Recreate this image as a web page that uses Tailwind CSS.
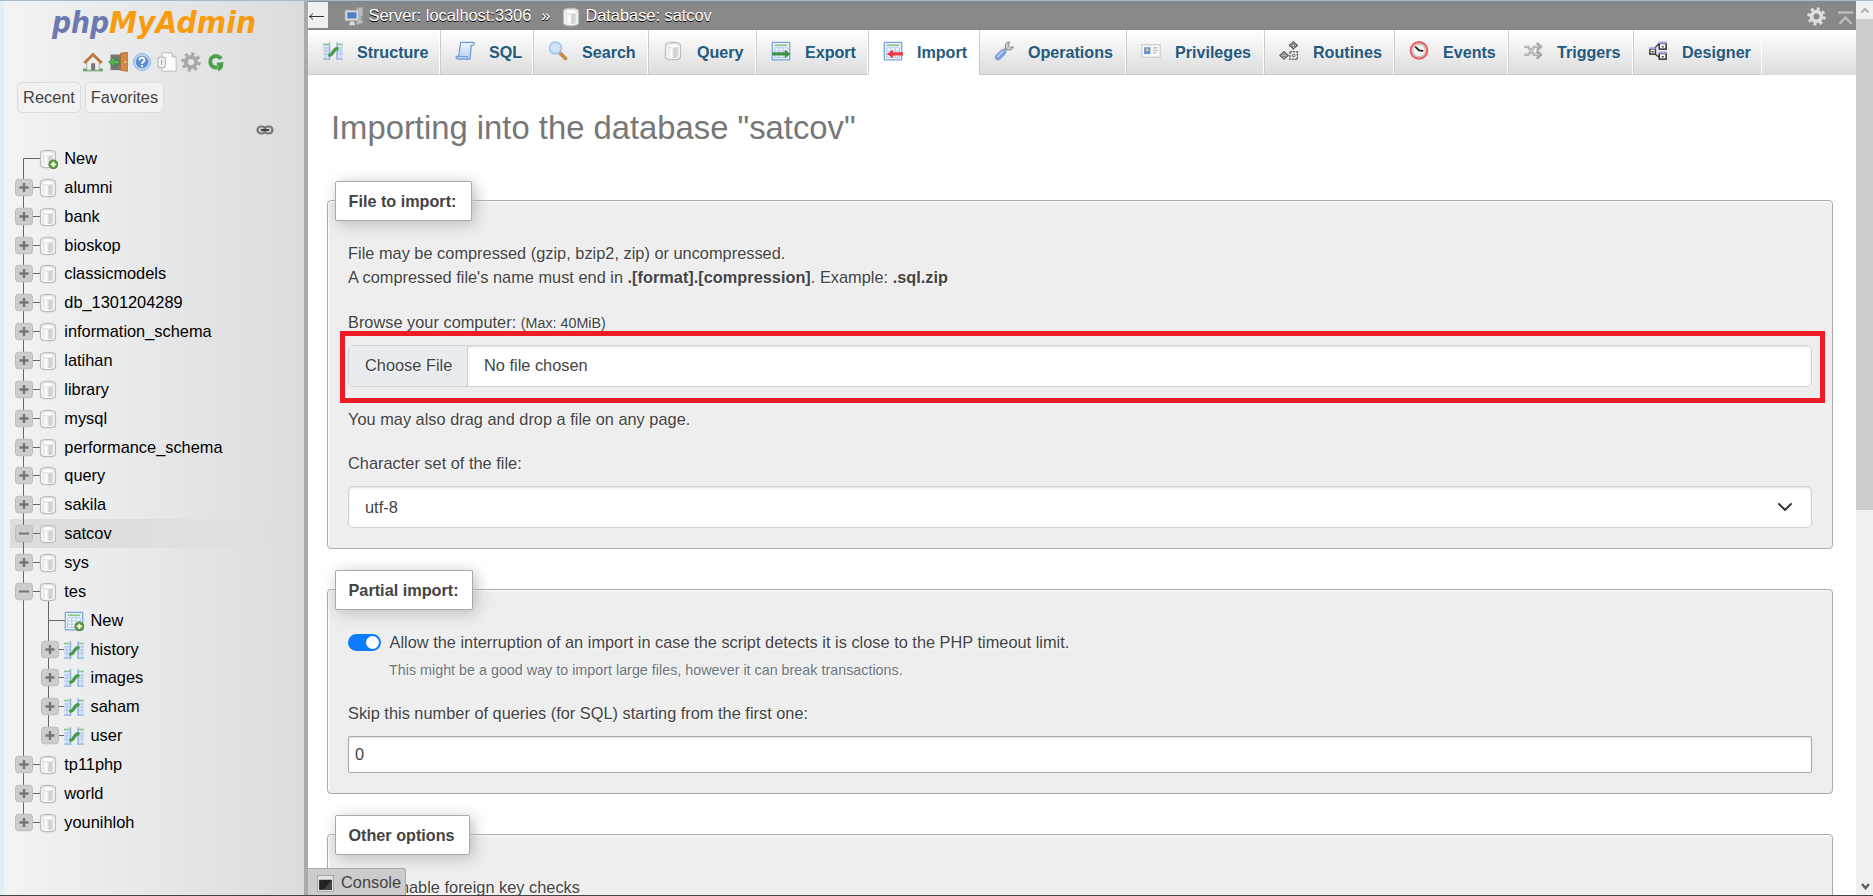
<!DOCTYPE html>
<html lang="en">
<head>
<meta charset="utf-8">
<title>Import - satcov - phpMyAdmin</title>
<script src="https://cdn.jsdelivr.net/npm/@tailwindcss/browser@4"></script>
</head>
<body class="h-[896px] w-[1873px] overflow-hidden bg-white text-[16.380px] text-[#444] [font-family:'Liberation_Sans',Arial,sans-serif]">
<svg class="absolute size-0">
  <defs>
    <linearGradient id="cyl"><stop offset="0" stop-color="#e2e2e2"/><stop offset=".35" stop-color="#fff"/><stop offset=".65" stop-color="#cdcdcd"/><stop offset="1" stop-color="#e0e0e0"/></linearGradient>
    <linearGradient id="blu" x1="0" y1="0" x2="0" y2="1"><stop offset="0" stop-color="#eef5fd"/><stop offset="1" stop-color="#b3d0f3"/></linearGradient>
  </defs>
  <symbol id="db" viewBox="0 0 16 16"><path d="M2 3.500C2 .2 14 .2 14 3.500v9c0 3.300-12 3.300-12 0z" fill="#f8f8f8" stroke="#bcbcbc"/><path d="M3.700 4.500h8.600v8c-1 1.500-7.600 1.500-8.600 0z" fill="url(#cyl)"/><ellipse cx="8" cy="3.900" rx="4.500" ry="1.700" fill="#fff" stroke="#d0d0d0" stroke-width=".6"/></symbol>
  <symbol id="add" viewBox="0 0 16 16"><circle cx="12.300" cy="12.300" r="3.600" fill="#5d9d3a" stroke="#3f7a26" stroke-width=".6"/><path d="M12.300 10.200v4.200M10.200 12.300h4.200" stroke="#fff" stroke-width="1.400"/></symbol>
  <symbol id="tbl" viewBox="0 0 16 16"><rect x="1" y="1" width="14" height="14" rx=".5" fill="#e6f0fb" stroke="#7ea3d8"/><path d="M3 3.400h10" stroke="#8cc97a" stroke-width="1.300"/><path d="M3 5.500h10v7.500H3z" fill="#fff" stroke="#a9c4e8" stroke-width=".8"/><path d="M3 8h10M3 10.500h10M6.300 5.500V13M9.700 5.500V13" stroke="#a9c4e8" stroke-width=".8"/></symbol>
  <symbol id="struct" viewBox="0 0 16 16"><path d="M0 1.500h5.200v13H0zM16 1.500h-4.700v13H16z" fill="#dce9f9"/><path d="M5.200 1v14M11.300 1v14" stroke="#8db2e3" stroke-width="1.200"/><path d="M0 14.500h5.500M11 14.500h5" stroke="#8db2e3"/><path d="M0 2.700h4.500M12 2.700H16" stroke="#8cc97a" stroke-width="1.200"/><path d="M0 5.500h4.500M0 8h4.500M0 10.500h4.500M12 5.500H16M12 8H16M12 10.500H16M2.300 5v9M14.300 5v9" stroke="#a9c4e8" stroke-width=".7"/><path d="M5.300 11.300c1.500 0 1.700-.8 2.700-2.300s1.600-2.800 3.300-2.800" fill="none" stroke="#4b9a49" stroke-width="2.700" stroke-linecap="round"/></symbol>
  <symbol id="gear" viewBox="0 0 16 16"><circle cx="8" cy="8" r="6.500" fill="none" stroke="currentColor" stroke-width="2.600" stroke-dasharray="2.500 2.605"/><circle cx="8" cy="8" r="4.100" fill="none" stroke="currentColor" stroke-width="3.200"/></symbol>
  <symbol id="plus" viewBox="0 0 18 18"><rect x=".5" y=".5" width="17" height="17" rx="3.500" fill="#cdcdcd" stroke="#bbb"/><path d="M9 4.500v9M4.500 9h9" stroke="#757575" stroke-width="2.400"/></symbol>
  <symbol id="minus" viewBox="0 0 18 18"><rect x=".5" y=".5" width="17" height="17" rx="3.500" fill="#cdcdcd" stroke="#bbb"/><path d="M4 9h10" stroke="#757575" stroke-width="2"/></symbol>
</svg>
<div class="flex h-[896px] flex-col border-t border-b border-t-[#a9bac6] border-b-[#444]">
<div class="flex min-h-0 flex-1">
  <div class="w-1 shrink-0 bg-[#e5eef5]"></div>
  <aside class="flex w-[300px] shrink-0 flex-col bg-linear-to-r from-[#f3f3f3] to-[#dadcde]">
    <svg class="mt-[5px] ml-[46px] h-[38px] w-[212px]" viewBox="0 0 212 38">
      <text x="2" y="27" textLength="57" lengthAdjust="spacingAndGlyphs" font-family="'DejaVu Sans'" font-size="29.500" font-style="oblique" font-weight="bold" fill="#6c78af">php</text>
      <text x="59" y="27" textLength="147" lengthAdjust="spacingAndGlyphs" font-family="'DejaVu Sans'" font-size="29.500" font-style="oblique" font-weight="bold" fill="#f89c0e">MyAdmin</text>
    </svg>
    <div class="mt-[8px] ml-[79px] flex h-5 gap-[4.500px]">
      <svg class="size-5" viewBox="0 0 16 16"><path d="M0 13.200h16v2.300H0z" fill="#63a85c"/><path d="M3 8l5-5 5 5v6.500H3z" fill="#eee" stroke="#999" stroke-width=".6"/><path d="M6.500 9h3.200v5.500H6.500z" fill="#777"/><path d="M1 8.800L8 2l7 6.800" fill="none" stroke="#b97a3c" stroke-width="2.200"/></svg>
      <svg class="size-5" viewBox="0 0 16 16"><path d="M2 2h9v12.500H2z" fill="#777"/><path d="M10 1l5.500-.8v15.300L10 14.500z" fill="#d08a45" stroke="#a8672a" stroke-width=".6"/><circle cx="13.800" cy="8" r=".7" fill="#ffe08a"/><path d="M.5 8l4.500-4v2.500h4v3H5V12z" fill="#57b457" stroke="#2f8038" stroke-width=".5"/></svg>
      <svg class="size-5" viewBox="0 0 16 16"><circle cx="8" cy="8" r="6.800" fill="#bcd5f2" stroke="#8aaedc" stroke-width=".7"/><circle cx="8" cy="8" r="5" fill="#5b8fd0"/><path d="M6 6.500C6 4 10 4 10 6.400 10 8 8 7.900 8 9.400M8 10.600v1.400" stroke="#fff" stroke-width="1.500" fill="none"/></svg>
      <svg class="size-5" viewBox="0 0 16 16"><path d="M4 .7h8l3.300 3.300v11.300H4z" fill="#fcfcfc" stroke="#bcbcbc" stroke-width=".8"/><path d="M12 .7V4h3.300" fill="#e0e0e0" stroke="#bcbcbc" stroke-width=".8"/><rect x=".7" y="4" width="6" height="8.500" rx="2" fill="#f4f4f4" stroke="#bcbcbc"/><path d="M3.700 6v4.500" stroke="#b5b5b5" stroke-width="1.200"/></svg>
      <svg class="size-5 text-[#a9a9a9]"><use href="#gear"/></svg>
      <svg class="size-5" viewBox="0 0 16 16"><path d="M12 5.500A4.600 4.600 0 1 0 9 12.300" fill="none" stroke="#50a04b" stroke-width="3.200"/><path d="M6.500 8h6.500M8.500 8.500l5.500-.5-.5 4.500-3.500 3z" fill="#50a04b"/></svg>
    </div>
    <div class="mt-[10px] ml-[13px] flex gap-1">
      <div class="h-[31px] w-[64px] rounded-[5px] border border-[#ddd] bg-[#f2f2f2] pt-[3px] text-center leading-[23px]">Recent</div>
      <div class="h-[31px] w-[79px] rounded-[5px] border border-[#ddd] bg-[#f2f2f2] pt-[3px] text-center leading-[23px]">Favorites</div>
    </div>
    <svg class="mt-[11px] ml-[252px] h-[12px] w-[18px]" viewBox="0 0 18 12"><rect x="1.500" y="2.500" width="8" height="7" rx="3.500" fill="#ccc" stroke="#777" stroke-width="2.200"/><rect x="8.500" y="2.500" width="8" height="7" rx="3.500" fill="#ccc" stroke="#777" stroke-width="2.200"/><path d="M5 6h8" stroke="#444" stroke-width="2"/></svg>
    <ul id="tree" class="mt-[8px] ml-[6px] text-black"></ul>
  </aside>
  <div class="w-1 shrink-0 bg-[#aaa]"></div>
  <main class="relative flex min-w-0 flex-1 flex-col overflow-hidden">
    <div class="flex h-[29px] shrink-0 items-start bg-[#888] text-white [text-shadow:0_1px_0_#000]">
      <div class="mt-px h-[26px] w-5 bg-[#f0f0f0]"><svg class="size-full" viewBox="0 0 20 26"><path d="M1.500 14.500h14.500M5 11.500l-3.500 3 3.500 3" fill="none" stroke="#333" stroke-width="1"/></svg></div>
      <svg class="mt-[6px] ml-4 size-5" viewBox="0 0 16 16"><path d="M10 1l5-1v13l-5 1z" fill="#bdbdbd" stroke="#999" stroke-width=".6"/><path d="M14 7v4" stroke="#5cb85c"/><rect x=".8" y="2.500" width="11" height="8.500" rx="1" fill="#dcdcdc" stroke="#aaa" stroke-width=".8"/><rect x="2.600" y="4.200" width="7.400" height="5" fill="#4f7fc4"/><path d="M4 14.500h5l-1-3H5z" fill="#ddd"/></svg>
      <span class="ml-[4.500px] leading-[29px]">Server: localhost:3306</span>
      <span class="ml-[10px] leading-[29px]">»</span>
      <svg class="mt-[6px] ml-[11px] size-5"><use href="#db"/></svg>
      <span class="ml-[4px] leading-[29px]">Database: satcov</span>
      <svg class="mt-[6px] ml-auto size-[19px] text-[#dedede]"><use href="#gear"/></svg>
      <svg class="mt-[10px] mr-[3px] ml-[12px] h-[14px] w-[15px] shrink-0" viewBox="0 0 15 14"><path d="M0 1.500h15M1.500 13l6-6.500 6 6.500" fill="none" stroke="#bbb" stroke-width="2.500"/></svg>
    </div>
    <nav id="tabs" class="flex h-[45px] shrink-0 bg-linear-to-b from-white to-[#dcdcdc] text-[16.100px] font-bold text-[#235a81]">
    </nav>
    <h2 class="mt-[31px] ml-[23px] h-[44px] shrink-0 text-[32.800px] leading-[44px] text-[#777]">Importing into the database "satcov"</h2>

    <section class="relative mt-[50px] mr-[23px] ml-[19px] h-[349px] shrink-0 rounded-[4px] border border-[#aaa] bg-[#eee] px-5 [text-shadow:1px_1px_2px_#fff] shadow-[inset_1px_1px_2px_#fff]">
      <div class="absolute top-[-20px] left-[7px] h-[40px] w-[137px] rounded-[2px] border border-[#aaa] bg-white pl-[12.500px] text-[16.200px] leading-[39px] font-bold shadow-[3px_3px_15px_#bbb]">File to import:</div>
      <p class="mt-[40px] leading-6">File may be compressed (gzip, bzip2, zip) or uncompressed.<br>A compressed file's name must end in <b class="text-[16.330px]">.[format].[compression]</b>. Example: <b class="text-[16.330px]">.sql.zip</b></p>
      <div class="mt-[21px] leading-6">Browse your computer: <small class="text-[14.320px]">(Max: 40MiB)</small></div>
      <div class="mt-[10px] flex h-[42px] overflow-hidden rounded-[5px] border border-[#ced4da] bg-white leading-[39px]">
        <div class="w-[119px] border-r border-[#ced4da] bg-[#e9ecef] pl-4">Choose File</div>
        <div class="flex-1 pl-4 shadow-[inset_0_1px_2px_#ddd]">No file chosen</div>
      </div>
      <div class="absolute top-[130px] left-[12px] h-[72px] w-[1485px] border-[5px] border-[#ed1c24]"></div>
      <p class="mt-[20px] leading-6">You may also drag and drop a file on any page.</p>
      <p class="mt-5 leading-6">Character set of the file:</p>
      <div class="mt-[11px] flex h-[42px] items-center justify-between rounded-[5px] border border-[#ced4da] bg-white pr-[18px] pl-4 shadow-[inset_0_1px_2px_#ddd]">utf-8
        <svg class="h-[16px] w-[16px]" viewBox="0 0 16 16"><path d="M2 5l6 6 6-6" fill="none" stroke="#343a40" stroke-width="2" stroke-linecap="round" stroke-linejoin="round"/></svg>
      </div>
    </section>

    <section class="relative mt-[40px] mr-[23px] ml-[19px] h-[205px] shrink-0 rounded-[4px] border border-[#aaa] bg-[#eee] px-5 [text-shadow:1px_1px_2px_#fff] shadow-[inset_1px_1px_2px_#fff]">
      <div class="absolute top-[-20px] left-[7px] h-[40px] w-[138px] rounded-[2px] border border-[#aaa] bg-white pl-[12.500px] text-[16.250px] leading-[39px] font-bold shadow-[3px_3px_15px_#bbb]">Partial import:</div>
      <div class="mt-[40px] flex items-center leading-6">
        <div class="flex h-[17px] w-[33px] items-center justify-end rounded-full bg-[#0d7bff] pr-[2px]"><div class="size-[13px] rounded-full bg-white"></div></div>
        <span class="ml-[8.500px]">Allow the interruption of an import in case the script detects it is close to the PHP timeout limit.</span>
      </div>
      <div class="mt-[6px] ml-[41px] text-[14.340px] leading-[21px] text-[#6c757d]">This might be a good way to import large files, however it can break transactions.</div>
      <p class="mt-[20px] leading-6">Skip this number of queries (for SQL) starting from the first one:</p>
      <div class="mt-[11px] h-[37px] rounded-[2px] border border-[#aaa] bg-white pl-[6px] leading-[35px] shadow-[inset_0_1px_2px_#ddd]">0</div>
    </section>

    <section class="relative mt-[40px] mr-[23px] ml-[19px] h-[205px] shrink-0 rounded-[4px] border border-[#aaa] bg-[#eee] px-5 [text-shadow:1px_1px_2px_#fff] shadow-[inset_1px_1px_2px_#fff]">
      <div class="absolute top-[-20px] left-[7px] h-[40px] w-[135px] rounded-[2px] border border-[#aaa] bg-white pl-[12.500px] text-[16.200px] leading-[39px] font-bold shadow-[3px_3px_15px_#bbb]">Other options</div>
      <p class="mt-[40px] pl-[41px] leading-6">Enable foreign key checks</p>
    </section>
    <div class="absolute bottom-0 left-0 flex h-[27px] w-[98px] items-center rounded-tr-[3px] border-t border-r border-[#aaa] bg-[#ccc]">
      <svg class="mt-[2px] ml-[9px] size-[17px]" viewBox="0 0 16 16"><rect x=".5" y=".5" width="15" height="15" fill="#e5e5e5" stroke="#aaa"/><path d="M2 4.500h12v9.500H2z" fill="#222"/><path d="M14 4.500V14H6z" fill="#444"/></svg>
      <span class="ml-[7px] leading-6">Console</span>
    </div>
  </main>
  <div class="flex w-[17px] shrink-0 flex-col bg-[#f0f0f0]">
    <svg class="h-[18px] w-[17px]" viewBox="0 0 17 18"><path d="M5.500 11.500L9 8l3.500 3.500" fill="none" stroke="#b0b0b0" stroke-width="2"/></svg>
    <div class="h-[491px] bg-[#cdcdcd]"></div>
    <svg class="mt-auto h-[17px] w-[17px]" viewBox="0 0 17 17"><path d="M6 6l3.500 4L13 6" fill="none" stroke="#606060" stroke-width="2.500"/></svg>
  </div>
</div>
</div>
<script>
const tabs = [
 ['Structure',132,'<use href="#struct"/>'],
 ['SQL',93,'<path d="M4.500 1h10c1.500 0 1 2.500-.5 2.500H13L12 14.500H2.500C.5 14.500.5 12 2 12h1z" fill="url(#blu)" stroke="#6f9bd6"/><path d="M2.500 12.500H10v2" fill="none" stroke="#6f9bd6" stroke-width=".8"/>'],
 ['Search',115,'<path d="M9.500 9.500l4.500 4.500" stroke="#c98a50" stroke-width="3" stroke-linecap="round"/><circle cx="6" cy="5.500" r="4.700" fill="#cfe2fa" stroke="#aac4e8" stroke-width="1.400"/>'],
 ['Query',108,'<use href="#db"/>'],
 ['Export',112,'<use href="#tbl"/><path d="M1 9h10V7l4.700 3.300-4.700 3.200v-2H1z" fill="#3f9142"/>'],
 ['Import',111,'<use href="#tbl"/><path d="M16 9H8V7L3 10.300l5 3.200v-2h8z" fill="#ee3b43"/>'],
 ['Operations',147,'<path d="M3.200 13l4-4" stroke="#7c9fe0" stroke-width="5" stroke-linecap="round"/><path d="M3 12.500l4-4" stroke="#b9cdf3" stroke-width="1.500" stroke-linecap="round"/><path d="M8.500 7.500l3-3" stroke="#aaa" stroke-width="3"/><path d="M12.500.8a3.200 3.200 0 1 0 2.900 3.700l-2.400.7-1.600-1.600z" fill="#ccc" stroke="#888" stroke-width=".8"/>'],
 ['Privileges',138,'<rect x=".7" y="3" width="14.600" height="10" fill="#fafafa" stroke="#ccc"/><rect x="2.500" y="5" width="5" height="5.500" fill="#5a92d8"/><circle cx="5" cy="7" r="1.300" fill="#f0c080"/><path d="M9.500 5.500h4M9.500 7.500h4M9.500 9.500h3" stroke="#bbb"/>'],
 ['Routines',130,'<g fill="#e4e4e4" stroke="#666" stroke-width="1.100"><path d="M11.500.6l1.200 1.300 2 1.600-2 1.600-1.200 1.300-1.200-1.300-2-1.600 2-1.600zM4 8.500l1.300 1.300 2 1.700-2 1.700L4 14.500l-1.300-1.300-2-1.700 2-1.700z" stroke-linejoin="round"/><rect x="8.700" y="8.500" width="6" height="6.200" stroke-dasharray="1.800 .7"/></g><g fill="#fff" stroke="#777" stroke-width=".9"><circle cx="11.500" cy="3.500" r="1"/><circle cx="4" cy="11.500" r="1"/><circle cx="11.700" cy="11.600" r="1"/></g>'],
 ['Events',114,'<circle cx="8" cy="7.500" r="6.600" fill="#eee" stroke="#ee5e5e" stroke-width="1.700"/><circle cx="8" cy="7.500" r="5" fill="#f5f5f5" stroke="#aaa" stroke-width=".7"/><path d="M5 4.500l3 3 3.500.5" fill="none" stroke="#222" stroke-width="1.400"/>'],
 ['Triggers',125,'<path d="M1 4.500h3l5 6.500h4M1 11h3l5-6.500h4M11 1.500l3.300 3-3.300 3M11 8l3.300 3-3.300 3" fill="none" stroke="#a5a5a5" stroke-width="2"/><path d="M1 4.500h3l5 6.500h4M1 11h3l5-6.500h4" fill="none" stroke="#ddd" stroke-width=".7"/>'],
 ['Designer',129,'<path d="M5 6l4-4M5 10l4 3" stroke="#444" stroke-width="1.200"/><g fill="#fff" stroke="#333" stroke-width="1.200"><rect x="1.500" y="6.500" width="4.500" height="4"/><rect x="9" y="2" width="5.500" height="4.500"/><rect x="9" y="10" width="5.500" height="4.500"/></g><path d="M8.500 1.200h6.500M8.500 9.300h6.500M1 5.900h5" stroke="#a5a5e5" stroke-width="1.800"/><path d="M3 8.500h1.500M11 4.500h1.500M11 12.500h1.500" stroke="#333" stroke-width="1.200"/>']
];
document.getElementById('tabs').innerHTML = tabs.map(([t,w,i],n) =>
 `<a class="flex h-[45px] shrink-0 items-start border-r border-r-white pt-[11px] ${n?'border-l border-l-[#ccc]':'pl-px'} ${t==='Import'?'bg-white':'border-b border-b-[#ccc]'}" style="width:${w}px"><svg class="ml-[14px] size-5 shrink-0" viewBox="0 0 16 16">${i}</svg><span class="ml-[14px] leading-[22px]">${t}</span></a>`).join('');
const rows = 'New alumni bank bioskop classicmodels db_1301204289 information_schema latihan library mysql performance_schema query sakila satcov sys tes >New >history >images >saham >user tp11php world younihloh'.split(' ');
const V = (x,a,b) => `<path d="M${x} ${a}V${b}" stroke="#666"/>`;
const H = (x,b) => `<path d="M${x} 14.500H${b}" stroke="#666"/>`;
document.getElementById('tree').innerHTML = rows.map((r,i) => {
 const sub = r[0]==='>', t = r.replace('>',''), n = t==='New';
 let g = '';
 if (!sub) g += V(13.500, n?14.5:0, i===rows.length-1?14.5:29);
 else g += V(13.500,0,29) + V(38.500,0, t==='user'?14.5:29);
 if (t==='tes') g += V(38.500,20,29);
 g += H(sub?39:13.500, sub?56:32);
 if (!n) g += `<svg x="${sub?31:5}" y="5.500" width="18" height="18" viewBox="0 0 18 18"><use href="#${t==='satcov'||t==='tes'?'minus':'plus'}"/></svg>`;
 const ic = sub ? (n?'tbl':'struct') : 'db';
 g += `<svg x="${sub?54:28}" y="5" width="20" height="20" viewBox="0 0 16 16"><use href="#${ic}"/>${n?'<use href="#add"/>':''}</svg>`;
 return `<li class="flex h-[28.870px] ${t==='satcov'?'bg-linear-to-r from-[#ddd] from-40% to-[#ddd]/0':''}"><svg class="h-[29px] shrink-0 overflow-visible ${sub?'w-[80.500px]':'w-[54.300px]'}">${g}</svg><span class="leading-[28px]">${t}</span></li>`;
}).join('');
</script>
</body>
</html>
